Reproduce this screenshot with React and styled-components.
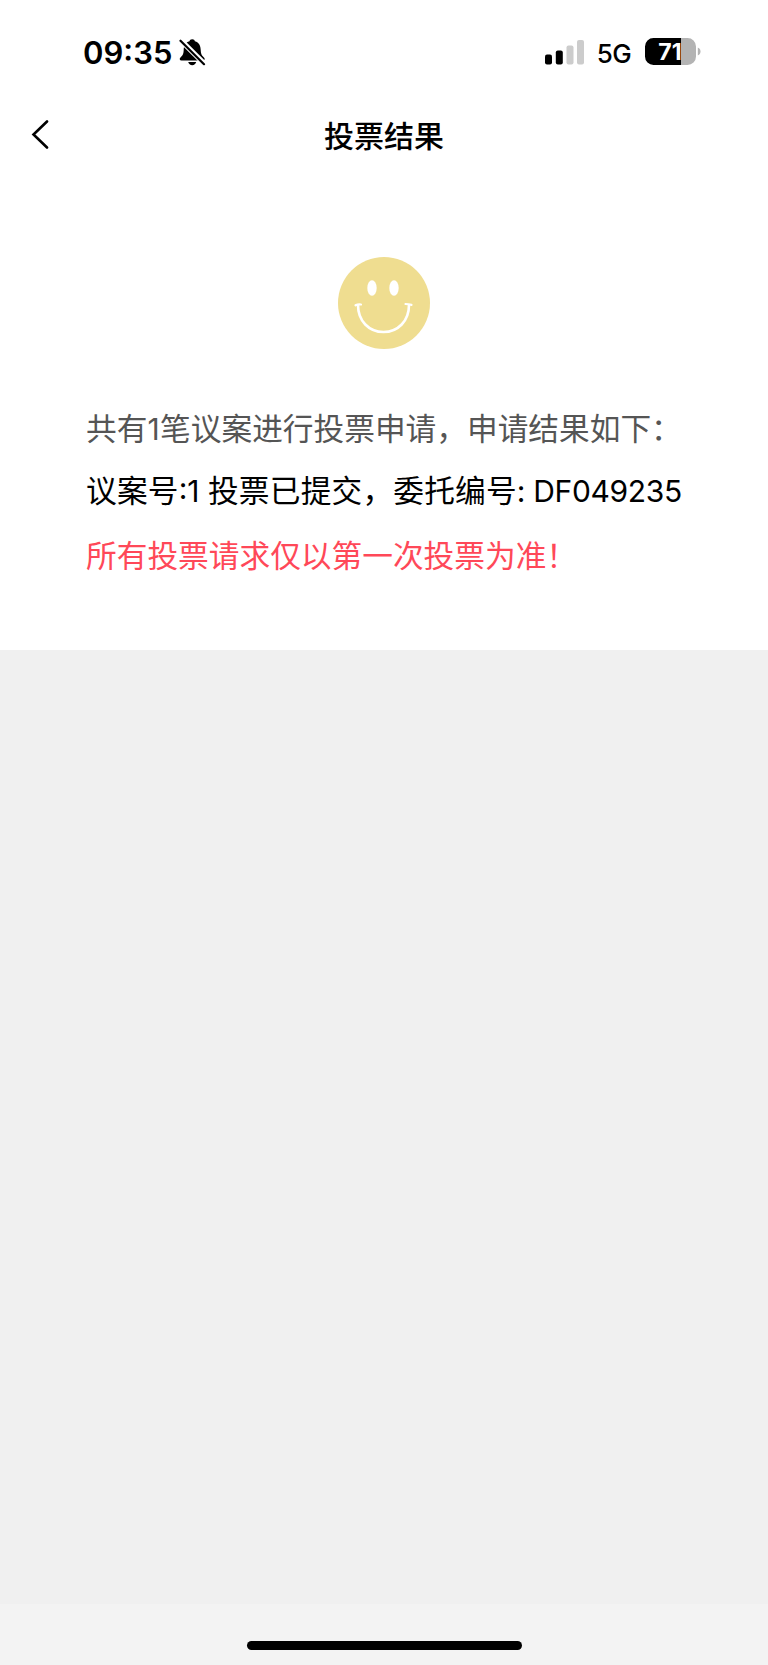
import React, { Component } from 'react';
import styled, { createGlobalStyle } from 'styled-components';

const GlobalStyle = createGlobalStyle`
  * {
    box-sizing: border-box;
  }

  body {
    margin: 0;
    background: #f0f0f0;
  }
`;

const AppWrapper = styled.div`
  width: 768px;
  height: 1665px;
  display: flex;
  flex-direction: column;
  overflow: hidden;
  background: #f0f0f0;
  color: #000;
  font-family: Inter, 'Noto Sans CJK SC', sans-serif;
`;

const StatusBar = styled.div`
  height: 104px;
  display: flex;
  justify-content: space-between;
  align-items: flex-start;
  padding: 35px 67px 0 83px;
  background: #fff;
`;

const StatusGroup = styled.div`
  height: 35px;
  display: flex;
  align-items: center;
`;

const Clock = styled.span`
  margin-right: 7px;
  font-size: 31px;
  font-weight: 600;
  line-height: 35px;
`;

const Network = styled.span`
  margin: 2px 14px 0 13px;
  font-size: 26px;
  font-weight: 500;
  line-height: 35px;
  letter-spacing: -0.6px;
`;

const Header = styled.div`
  height: 64px;
  display: grid;
  grid-template-columns: 80px 1fr 80px;
  align-items: center;
  background: #fff;
`;

const BackButton = styled.button`
  height: 64px;
  padding: 0 0 2px 30px;
  border: 0;
  background: none;
  text-align: left;

  svg {
    display: block;
  }
`;

const Title = styled.h1`
  margin: 0;
  font-size: 30px;
  font-weight: 500;
  line-height: 64px;
  text-align: center;
`;

const Result = styled.div`
  height: 482px;
  display: flex;
  flex-direction: column;
  padding: 89px 0 0 86px;
  background: #fff;
`;

const Face = styled.svg`
  display: block;
  margin: 0 0 57px 252px;
`;

const Line = styled.p`
  margin: 0;
  height: ${props => props.$height || 62}px;
  color: ${props => props.$color || '#000'};
  font-size: 30.7px;
  line-height: 46px;
  letter-spacing: ${props => props.$spacing || 0}px;
  white-space: pre;
`;

const Latin = styled.span`
  font-size: 30px;
  letter-spacing: ${props => props.$spacing || 0}px;
`;

const Footer = styled.div`
  height: 61px;
  margin-top: auto;
  padding-top: 37px;
  background: #f3f3f3;
`;

const HomeIndicator = styled.div`
  width: 275px;
  height: 9px;
  margin: 0 auto;
  border-radius: 5px;
  background: #000;
`;

const BellOff = () => (
  <svg width="27" height="29" viewBox="0 0 27 29">
    <path d="M13.2 1.2c-1.6 0-2.5.8-2.7 2C6.200 4.400 4.800 7.800 4.700 12c-.1 3.500-.8 5.300-3 7.200-1.600 1.400-1.200 3.200.8 3.200h21.400c2 0 2.400-1.800.8-3.200-2.200-1.900-2.900-3.700-3-7.200-.1-4.200-1.500-7.600-5.800-8.800-.2-1.200-1.100-2-2.700-2z" />
    <path d="M9.200 24h8c-.5 2-2 3.200-4 3.200s-3.500-1.200-4-3.200z" />
    <path d="M1 1.500l25 25" stroke="#fff" strokeWidth="5.200" />
    <path d="M1.500 2.700l23.500 23.500" stroke="#000" strokeWidth="2.200" strokeLinecap="round" />
  </svg>
);

const Signal = () => (
  <svg width="39" height="26" viewBox="0 0 39 26">
    <rect x="0" y="14.500" width="7" height="10" rx="2" />
    <rect x="10.800" y="10.500" width="7" height="14" rx="2" />
    <rect x="21.500" y="5.500" width="7" height="19" rx="2" fill="#ccc" />
    <rect x="32" y="0" width="7" height="24.500" rx="2" fill="#ccc" />
  </svg>
);

const Battery = () => (
  <svg width="56" height="29" viewBox="0 1 56 29">
    <path d="M8.500 1H36v27H8.500A8.500 8.500 0 0 1 0 19.500v-10A8.500 8.500 0 0 1 8.500 1z" />
    <path d="M36 1h6.500A8.500 8.500 0 0 1 51 9.500v10a8.500 8.500 0 0 1-8.500 8.500H36z" fill="#b3b3b3" />
    <path d="M52.800 10.500c3.600 1.200 3.600 6.800 0 8z" fill="#b3b3b3" />
    <text x="25" y="22.600" fill="#fff" fontFamily="Inter, sans-serif" fontSize="23" fontWeight="700" textAnchor="middle">71</text>
  </svg>
);

class App extends Component {
  render() {
    return (
      <AppWrapper>
        <GlobalStyle />

        <StatusBar>
          <StatusGroup>
            <Clock>09:35</Clock>
            <BellOff />
          </StatusGroup>
          <StatusGroup>
            <Signal />
            <Network>5G</Network>
            <Battery />
          </StatusGroup>
        </StatusBar>

        <Header>
          <BackButton aria-label="返回">
            <svg width="20" height="30" viewBox="0 0 20 30" fill="none" stroke="#000" strokeWidth="2.600" strokeLinecap="round">
              <path d="M17 1.500L3.500 14.500L17 27.500" />
            </svg>
          </BackButton>
          <Title>投票结果</Title>
        </Header>

        <Result>
          <Face width="92" height="92" viewBox="0 0 92 92">
            <circle cx="46" cy="46" r="46" fill="#efdd90" />
            <ellipse cx="34" cy="31" rx="4.700" ry="7.800" fill="#fff" />
            <ellipse cx="56" cy="31" rx="4.700" ry="7.800" fill="#fff" />
            <path d="M20 48C20 64 31 75 45.500 75S71 64 71 48" fill="none" stroke="#fff" strokeWidth="2.600" />
            <path d="M17.500 48.300q2.500-1.300 5.500-.8M67.500 47q3 .2 6 .8" fill="none" stroke="#fff" strokeWidth="2.200" strokeLinecap="round" />
          </Face>
          <Line $color="#555">共有<Latin $spacing={0.5}>1</Latin>笔议案进行投票申请，申请结果如下：</Line>
          <Line $height={65} $spacing={0.2}>议案号<Latin>:1 </Latin>投票已提交，委托编号<Latin $spacing={-0.35}>: DF049235</Latin></Line>
          <Line $color="#ff4858">所有投票请求仅以第一次投票为准！</Line>
        </Result>

        <Footer>
          <HomeIndicator />
        </Footer>
      </AppWrapper>
    );
  }
}

export default App;
